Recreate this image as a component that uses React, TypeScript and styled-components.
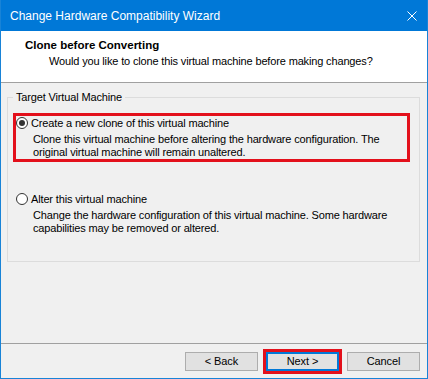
import React from "react";
import styled, { createGlobalStyle } from "styled-components";

const Global = createGlobalStyle`
  html, body { margin: 0; padding: 0; background: #ffffff; }
  body { font-family: "Liberation Sans", Arial, sans-serif; color: #000; }
  * { box-sizing: border-box; }
`;

const Window = styled.div`
  width: 428px;
  height: 379px;
  display: flex;
  flex-direction: column;
  background: #f0f0f0;
  border: 1px solid #1883d7;
  border-top: none;
`;

const TitleBar = styled.div`
  flex: none;
  height: 31px;
  background: #0078d7;
  display: flex;
  align-items: center;
  justify-content: space-between;
  padding: 0 10px 0 9px;
  color: #ffffff;
  font-size: 12px;
  line-height: 16px;
`;

const CloseIcon = styled.svg`
  display: block;
  width: 10px;
  height: 10px;
  margin-top: 0px;
`;

const Header = styled.div`
  flex: none;
  height: 52px;
  background: #ffffff;
  border-bottom: 1px solid #a0a0a0;
  padding: 7px 0 0 24px;
`;

const HeaderTitle = styled.div`
  font-size: 11.5px;
  font-weight: bold;
  line-height: 14px;
`;

const HeaderSubtitle = styled.div`
  margin-top: 2px;
  padding-left: 24px;
  font-size: 11px;
  line-height: 14px;
  letter-spacing: -0.15px;
`;

const Body = styled.div`
  flex: 1;
  padding: 7px 7px 0 6px;
`;

const GroupBox = styled.fieldset`
  margin: 0;
  min-width: 0;
  border: 1px solid #dcdcdc;
  padding: 9px 9px 23px 5px;
  display: flex;
  flex-direction: column;
  gap: 27px;
`;

const GroupLegend = styled.legend`
  padding: 0 3px;
  font-size: 11px;
  line-height: 14px;
  letter-spacing: -0.15px;
`;

const Option = styled.div<{ $highlighted?: boolean }>`
  border: 3px solid ${(p) => (p.$highlighted ? "#e3101b" : "transparent")};
`;

const OptionRow = styled.div`
  display: flex;
  align-items: center;
  gap: 3px;
  height: 14px;
`;

const Radio = styled.span<{ $checked?: boolean }>`
  flex: none;
  width: 12px;
  height: 12px;
  border-radius: 50%;
  border: 1px solid #333333;
  background: #ffffff;
  display: flex;
  align-items: center;
  justify-content: center;
  &::after {
    content: "";
    display: ${(p) => (p.$checked ? "block" : "none")};
    width: 6px;
    height: 6px;
    border-radius: 50%;
    background: #333333;
  }
`;

const OptionLabel = styled.span`
  font-size: 11px;
  line-height: 14px;
  letter-spacing: -0.15px;
  white-space: nowrap;
`;

const Description = styled.div`
  margin: 3px 0 0 17px;
  font-size: 11px;
  line-height: 13px;
  letter-spacing: -0.15px;
  white-space: nowrap;
`;

const Footer = styled.div`
  flex: none;
  height: 35px;
  border-top: 1px solid #a0a0a0;
  padding: 8px 7px 0 0;
  display: flex;
  justify-content: flex-end;
  align-items: flex-start;
  gap: 8px;
`;

const Button = styled.button<{ $primary?: boolean; $marked?: boolean }>`
  width: 73px;
  height: 19px;
  margin: 0;
  padding: 0;
  font-family: "Liberation Sans", Arial, sans-serif;
  font-size: 11px;
  line-height: 15px;
  letter-spacing: -0.1px;
  color: #000;
  background: #e1e1e1;
  border: 1px solid ${(p) => (p.$primary ? "#0078d7" : "#adadad")};
  box-shadow: ${(p) => (p.$primary ? "inset 0 0 0 1px #0078d7" : "none")};
  outline: ${(p) => (p.$marked ? "3px solid #e3101b" : "none")};
  outline-offset: 0;
`;

export default function App() {
  return (
    <>
      <Global />
      <Window>
        <TitleBar>
          <span>Change Hardware Compatibility Wizard</span>
          <CloseIcon viewBox="0 0 10 10">
            <path d="M0.5 0.5 L9.5 9.5 M9.5 0.5 L0.5 9.5" stroke="#ffffff" strokeWidth="1" fill="none" />
          </CloseIcon>
        </TitleBar>
        <Header>
          <HeaderTitle>Clone before Converting</HeaderTitle>
          <HeaderSubtitle>Would you like to clone this virtual machine before making changes?</HeaderSubtitle>
        </Header>
        <Body>
          <GroupBox>
            <GroupLegend>Target Virtual Machine</GroupLegend>
            <Option $highlighted>
              <OptionRow>
                <Radio $checked />
                <OptionLabel>Create a new clone of this virtual machine</OptionLabel>
              </OptionRow>
              <Description>
                Clone this virtual machine before altering the hardware configuration. The
                <br />
                original virtual machine will remain unaltered.
              </Description>
            </Option>
            <Option>
              <OptionRow>
                <Radio />
                <OptionLabel>Alter this virtual machine</OptionLabel>
              </OptionRow>
              <Description>
                Change the hardware configuration of this virtual machine. Some hardware
                <br />
                capabilities may be removed or altered.
              </Description>
            </Option>
          </GroupBox>
        </Body>
        <Footer>
          <Button>&lt; Back</Button>
          <Button $primary $marked>Next &gt;</Button>
          <Button>Cancel</Button>
        </Footer>
      </Window>
    </>
  );
}
